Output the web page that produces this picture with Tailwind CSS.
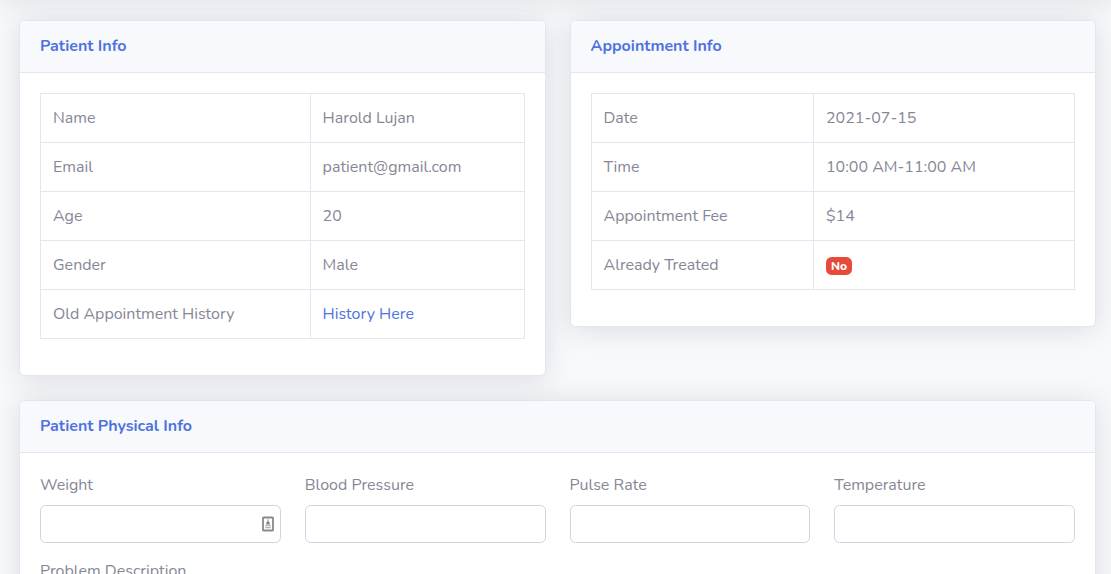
<!DOCTYPE html>
<html lang="en">
<head>
<meta charset="utf-8">
<title>Appointment</title>
<script src="https://cdn.jsdelivr.net/npm/@tailwindcss/browser@4"></script>
</head>
<body class="h-[574px] overflow-hidden bg-[#f8f9fc] font-[Nunito,Lato,sans-serif] text-base text-[#858796]">
<main class="pl-[19px] pr-[15px] h-[574px] overflow-hidden">
  <nav class="-mx-6 -mt-[74px] mb-6 h-[70px] bg-white shadow-[0_2.4px_28px_rgba(58,59,69,0.15)]"></nav>
  <div class="grid grid-cols-2 items-start gap-x-6">
    <section class="h-[356px] rounded-[5.6px] border border-[#e3e6f0] bg-white shadow-[0_2.4px_28px_rgba(58,59,69,0.15)]">
      <header class="h-[52px] rounded-t-[4.6px] border-b border-[#e3e6f0] bg-[#f8f9fc] px-5 py-[13px]"><h6 class="font-bold leading-6 text-[#4e73df]">Patient Info</h6></header>
      <div class="p-5">
        <table class="w-full table-fixed border-collapse border border-[#e3e6f0] [&_td]:h-[49px] [&_td]:border [&_td]:border-[#e3e6f0] [&_td]:px-3 [&_td]:py-0">
          <colgroup><col class="w-[269.6px]"><col></colgroup>
          <tr><td>Name</td><td>Harold Lujan</td></tr>
          <tr><td>Email</td><td>patient@gmail.com</td></tr>
          <tr><td>Age</td><td>20</td></tr>
          <tr><td>Gender</td><td>Male</td></tr>
          <tr><td>Old Appointment History</td><td><a href="#" class="text-[#4e73df]">History Here</a></td></tr>
        </table>
      </div>
    </section>
    <section class="h-[307px] rounded-[5.6px] border border-[#e3e6f0] bg-white shadow-[0_2.4px_28px_rgba(58,59,69,0.15)]">
      <header class="h-[52px] rounded-t-[4.6px] border-b border-[#e3e6f0] bg-[#f8f9fc] px-5 py-[13px]"><h6 class="font-bold leading-6 text-[#4e73df]">Appointment Info</h6></header>
      <div class="p-5">
        <table class="w-full table-fixed border-collapse border border-[#e3e6f0] [&_td]:h-[49px] [&_td]:border [&_td]:border-[#e3e6f0] [&_td]:px-3 [&_td]:py-0">
          <colgroup><col class="w-[222.5px]"><col></colgroup>
          <tr><td>Date</td><td>2021-07-15</td></tr>
          <tr><td>Time</td><td>10:00 AM-11:00 AM</td></tr>
          <tr><td>Appointment Fee</td><td>$14</td></tr>
          <tr><td>Already Treated</td><td><div class="mt-px flex h-[18px] w-[26px] items-center justify-center rounded-[5.6px] bg-[#e74a3b] text-xs font-extrabold leading-none text-white">No</div></td></tr>
        </table>
      </div>
    </section>
  </div>
  <section class="mt-6 h-[400px] rounded-[5.6px] border border-[#e3e6f0] bg-white shadow-[0_2.4px_28px_rgba(58,59,69,0.15)]">
    <header class="h-[52px] rounded-t-[4.6px] border-b border-[#e3e6f0] bg-[#f8f9fc] px-5 py-[13px]"><h6 class="font-bold leading-6 text-[#4e73df]">Patient Physical Info</h6></header>
    <div class="p-5">
      <div class="grid grid-cols-4 gap-6">
        <label class="block"><span class="mb-2 block leading-6">Weight</span>
          <span class="flex h-[38px] items-center justify-end rounded-[5.6px] border border-[#d1d3e2] bg-white pr-[6px]">
            <svg class="h-4 w-3" viewBox="0 0 12 16"><rect x="1" y="1.5" width="10" height="13" rx=".6" fill="#fff" stroke="#8a8a8a" stroke-width="1.8"/><path d="M6 3.2v2.5" stroke="#aaa" stroke-width="1.2"/><path d="M4.2 8.5c0-2 .8-3.2 1.8-3.2s1.8 1.2 1.8 3.2z" fill="#808080"/><path d="M3.2 9.6h5.6M3.2 11.6h5.6" stroke="#b5b5b5" stroke-width="1.3"/></svg>
          </span></label>
        <label class="block"><span class="mb-2 block leading-6">Blood Pressure</span><span class="block h-[38px] rounded-[5.6px] border border-[#d1d3e2] bg-white"></span></label>
        <label class="block"><span class="mb-2 block leading-6">Pulse Rate</span><span class="block h-[38px] rounded-[5.6px] border border-[#d1d3e2] bg-white"></span></label>
        <label class="block"><span class="mb-2 block leading-6">Temperature</span><span class="block h-[38px] rounded-[5.6px] border border-[#d1d3e2] bg-white"></span></label>
      </div>
      <label class="mt-4 block leading-6">Problem Description</label>
    </div>
  </section>
</main>
</body>
</html>
